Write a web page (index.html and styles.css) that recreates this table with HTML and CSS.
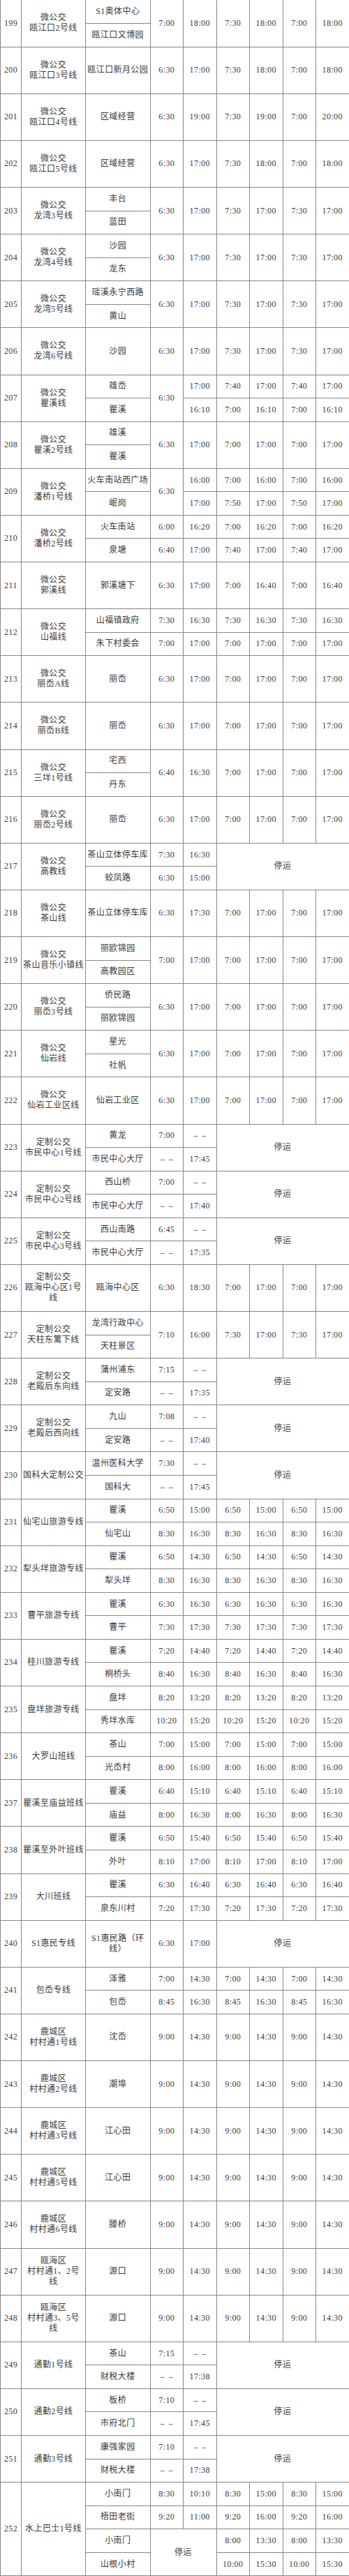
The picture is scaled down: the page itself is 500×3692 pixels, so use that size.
FILE: index.html
```html
<!DOCTYPE html>
<html lang="zh-CN">
<head>
<meta charset="utf-8">
<title>线路时刻表</title>
<link rel="stylesheet" href="styles.css">
</head>
<body>
<table class="timetable">
<colgroup>
<col class="c-no"><col class="c-name"><col class="c-stop">
<col class="c-t"><col class="c-t"><col class="c-t"><col class="c-t"><col class="c-t"><col class="c-t">
</colgroup>
<tbody>
<tr class="first"><td rowspan="2">199</td><td rowspan="2">微公交<br>瓯江口2号线</td><td>S1奥体中心</td><td rowspan="2">7:00</td><td rowspan="2">18:00</td><td rowspan="2">7:30</td><td rowspan="2">18:00</td><td rowspan="2">7:00</td><td rowspan="2">18:00</td></tr>
<tr><td>瓯江口文博园</td></tr>
<tr class="tall"><td>200</td><td>微公交<br>瓯江口3号线</td><td>瓯江口新月公园</td><td>6:30</td><td>17:00</td><td>7:30</td><td>18:00</td><td>7:00</td><td>18:00</td></tr>
<tr class="tall"><td>201</td><td>微公交<br>瓯江口4号线</td><td>区域经营</td><td>6:30</td><td>19:00</td><td>7:30</td><td>19:00</td><td>7:00</td><td>20:00</td></tr>
<tr class="tall"><td>202</td><td>微公交<br>瓯江口5号线</td><td>区域经营</td><td>6:30</td><td>17:00</td><td>7:30</td><td>18:00</td><td>7:00</td><td>18:00</td></tr>
<tr><td rowspan="2">203</td><td rowspan="2">微公交<br>龙湾3号线</td><td>丰台</td><td rowspan="2">6:30</td><td rowspan="2">17:00</td><td rowspan="2">7:30</td><td rowspan="2">17:00</td><td rowspan="2">7:30</td><td rowspan="2">17:00</td></tr>
<tr><td>蓝田</td></tr>
<tr><td rowspan="2">204</td><td rowspan="2">微公交<br>龙湾4号线</td><td>沙园</td><td rowspan="2">6:30</td><td rowspan="2">17:00</td><td rowspan="2">7:30</td><td rowspan="2">17:00</td><td rowspan="2">7:30</td><td rowspan="2">17:00</td></tr>
<tr><td>龙东</td></tr>
<tr><td rowspan="2">205</td><td rowspan="2">微公交<br>龙湾5号线</td><td>瑶溪永宁西路</td><td rowspan="2">6:30</td><td rowspan="2">17:00</td><td rowspan="2">7:30</td><td rowspan="2">17:00</td><td rowspan="2">7:30</td><td rowspan="2">17:00</td></tr>
<tr><td>黄山</td></tr>
<tr class="tall"><td>206</td><td>微公交<br>龙湾6号线</td><td>沙园</td><td>6:30</td><td>17:00</td><td>7:30</td><td>17:00</td><td>7:30</td><td>17:00</td></tr>
<tr><td rowspan="2">207</td><td rowspan="2">微公交<br>瞿溪线</td><td>雄岙</td><td rowspan="2">6:30</td><td>17:00</td><td>7:40</td><td>17:00</td><td>7:40</td><td>17:00</td></tr>
<tr><td>瞿溪</td><td>16:10</td><td>7:00</td><td>16:10</td><td>7:00</td><td>16:10</td></tr>
<tr><td rowspan="2">208</td><td rowspan="2">微公交<br>瞿溪2号线</td><td>雄溪</td><td rowspan="2">6:30</td><td rowspan="2">17:00</td><td rowspan="2">7:00</td><td rowspan="2">17:00</td><td rowspan="2">7:00</td><td rowspan="2">17:00</td></tr>
<tr><td>瞿溪</td></tr>
<tr><td rowspan="2">209</td><td rowspan="2">微公交<br>潘桥1号线</td><td>火车南站西广场</td><td rowspan="2">6:30</td><td>16:00</td><td>7:00</td><td>16:00</td><td>7:00</td><td>16:00</td></tr>
<tr><td>岷岗</td><td>17:00</td><td>7:50</td><td>17:00</td><td>7:50</td><td>17:00</td></tr>
<tr><td rowspan="2">210</td><td rowspan="2">微公交<br>潘桥2号线</td><td>火车南站</td><td>6:00</td><td>16:20</td><td>7:00</td><td>16:20</td><td>7:00</td><td>16:20</td></tr>
<tr><td>泉塘</td><td>6:40</td><td>17:00</td><td>7:40</td><td>17:00</td><td>7:40</td><td>17:00</td></tr>
<tr class="tall"><td>211</td><td>微公交<br>郭溪线</td><td>郭溪塘下</td><td>6:30</td><td>17:00</td><td>7:00</td><td>16:40</td><td>7:00</td><td>16:40</td></tr>
<tr><td rowspan="2">212</td><td rowspan="2">微公交<br>山福线</td><td>山福镇政府</td><td>7:30</td><td>16:30</td><td>7:30</td><td>16:30</td><td>7:30</td><td>16:30</td></tr>
<tr><td>朱下村委会</td><td>7:00</td><td>17:00</td><td>7:00</td><td>17:00</td><td>7:00</td><td>17:00</td></tr>
<tr class="tall"><td>213</td><td>微公交<br>丽岙A线</td><td>丽岙</td><td>6:30</td><td>17:00</td><td>7:00</td><td>17:00</td><td>7:00</td><td>17:00</td></tr>
<tr class="tall"><td>214</td><td>微公交<br>丽岙B线</td><td>丽岙</td><td>6:30</td><td>17:00</td><td>7:00</td><td>17:00</td><td>7:00</td><td>17:00</td></tr>
<tr><td rowspan="2">215</td><td rowspan="2">微公交<br>三垟1号线</td><td>宅西</td><td rowspan="2">6:40</td><td rowspan="2">16:30</td><td rowspan="2">7:00</td><td rowspan="2">17:00</td><td rowspan="2">7:00</td><td rowspan="2">17:00</td></tr>
<tr><td>丹东</td></tr>
<tr class="tall"><td>216</td><td>微公交<br>丽岙2号线</td><td>丽岙</td><td>6:30</td><td>17:00</td><td>7:00</td><td>17:00</td><td>7:00</td><td>17:00</td></tr>
<tr><td rowspan="2">217</td><td rowspan="2">微公交<br>高教线</td><td>茶山立体停车库</td><td>7:30</td><td>16:30</td><td rowspan="2" colspan="4">停运</td></tr>
<tr><td>蛟凤路</td><td>6:30</td><td>15:00</td></tr>
<tr class="tall"><td>218</td><td>微公交<br>茶山线</td><td>茶山立体停车库</td><td>6:30</td><td>17:30</td><td>7:00</td><td>17:00</td><td>7:00</td><td>17:00</td></tr>
<tr><td rowspan="2">219</td><td rowspan="2">微公交<br>茶山音乐小镇线</td><td>丽欧锦园</td><td rowspan="2">7:00</td><td rowspan="2">17:00</td><td rowspan="2">7:00</td><td rowspan="2">17:00</td><td rowspan="2">7:00</td><td rowspan="2">17:00</td></tr>
<tr><td>高教园区</td></tr>
<tr><td rowspan="2">220</td><td rowspan="2">微公交<br>丽岙3号线</td><td>侨民路</td><td rowspan="2">6:30</td><td rowspan="2">17:00</td><td rowspan="2">7:00</td><td rowspan="2">17:00</td><td rowspan="2">7:00</td><td rowspan="2">17:00</td></tr>
<tr><td>丽欧锦园</td></tr>
<tr><td rowspan="2">221</td><td rowspan="2">微公交<br>仙岩线</td><td>星光</td><td rowspan="2">6:30</td><td rowspan="2">17:00</td><td rowspan="2">7:00</td><td rowspan="2">17:00</td><td rowspan="2">7:00</td><td rowspan="2">17:00</td></tr>
<tr><td>社帆</td></tr>
<tr class="tall"><td>222</td><td>微公交<br>仙岩工业区线</td><td>仙岩工业区</td><td>6:30</td><td>17:00</td><td>7:00</td><td>17:00</td><td>7:00</td><td>17:00</td></tr>
<tr><td rowspan="2">223</td><td rowspan="2">定制公交<br>市民中心1号线</td><td>黄龙</td><td>7:00</td><td class="dash">–&nbsp;&nbsp;–</td><td rowspan="2" colspan="4">停运</td></tr>
<tr><td>市民中心大厅</td><td class="dash">–&nbsp;&nbsp;–</td><td>17:45</td></tr>
<tr><td rowspan="2">224</td><td rowspan="2">定制公交<br>市民中心2号线</td><td>西山桥</td><td>7:00</td><td class="dash">–&nbsp;&nbsp;–</td><td rowspan="2" colspan="4">停运</td></tr>
<tr><td>市民中心大厅</td><td class="dash">–&nbsp;&nbsp;–</td><td>17:40</td></tr>
<tr><td rowspan="2">225</td><td rowspan="2">定制公交<br>市民中心3号线</td><td>西山南路</td><td>6:45</td><td class="dash">–&nbsp;&nbsp;–</td><td rowspan="2" colspan="4">停运</td></tr>
<tr><td>市民中心大厅</td><td class="dash">–&nbsp;&nbsp;–</td><td>17:35</td></tr>
<tr class="tall"><td>226</td><td>定制公交<br>瓯海中心区1号线</td><td>瓯海中心区</td><td>6:30</td><td>18:30</td><td>7:00</td><td>17:00</td><td>7:00</td><td>17:00</td></tr>
<tr><td rowspan="2">227</td><td rowspan="2">定制公交<br>天柱东篱下线</td><td>龙湾行政中心</td><td rowspan="2">7:10</td><td rowspan="2">16:00</td><td rowspan="2">7:30</td><td rowspan="2">17:00</td><td rowspan="2">7:30</td><td rowspan="2">17:00</td></tr>
<tr><td>天柱景区</td></tr>
<tr><td rowspan="2">228</td><td rowspan="2">定制公交<br>老殿后东向线</td><td>蒲州浦东</td><td>7:15</td><td class="dash">–&nbsp;&nbsp;–</td><td rowspan="2" colspan="4">停运</td></tr>
<tr><td>定安路</td><td class="dash">–&nbsp;&nbsp;–</td><td>17:35</td></tr>
<tr><td rowspan="2">229</td><td rowspan="2">定制公交<br>老殿后西向线</td><td>九山</td><td>7:08</td><td class="dash">–&nbsp;&nbsp;–</td><td rowspan="2" colspan="4">停运</td></tr>
<tr><td>定安路</td><td class="dash">–&nbsp;&nbsp;–</td><td>17:40</td></tr>
<tr><td rowspan="2">230</td><td rowspan="2">国科大定制公交</td><td>温州医科大学</td><td>7:30</td><td class="dash">–&nbsp;&nbsp;–</td><td rowspan="2" colspan="4">停运</td></tr>
<tr><td>国科大</td><td class="dash">–&nbsp;&nbsp;–</td><td>17:45</td></tr>
<tr><td rowspan="2">231</td><td rowspan="2">仙宅山旅游专线</td><td>瞿溪</td><td>6:50</td><td>15:00</td><td>6:50</td><td>15:00</td><td>6:50</td><td>15:00</td></tr>
<tr><td>仙宅山</td><td>8:30</td><td>16:30</td><td>8:30</td><td>16:30</td><td>8:30</td><td>16:30</td></tr>
<tr><td rowspan="2">232</td><td rowspan="2">犁头垟旅游专线</td><td>瞿溪</td><td>6:50</td><td>14:30</td><td>6:50</td><td>14:30</td><td>6:50</td><td>14:30</td></tr>
<tr><td>犁头垟</td><td>8:30</td><td>16:30</td><td>8:30</td><td>16:30</td><td>8:30</td><td>16:30</td></tr>
<tr><td rowspan="2">233</td><td rowspan="2">曹平旅游专线</td><td>瞿溪</td><td>6:30</td><td>16:30</td><td>6:30</td><td>16:30</td><td>6:30</td><td>16:30</td></tr>
<tr><td>曹平</td><td>7:30</td><td>17:30</td><td>7:30</td><td>17:30</td><td>7:30</td><td>17:30</td></tr>
<tr><td rowspan="2">234</td><td rowspan="2">桂川旅游专线</td><td>瞿溪</td><td>7:20</td><td>14:40</td><td>7:20</td><td>14:40</td><td>7:20</td><td>14:40</td></tr>
<tr><td>桐桥头</td><td>8:40</td><td>16:30</td><td>8:40</td><td>16:30</td><td>8:40</td><td>16:30</td></tr>
<tr><td rowspan="2">235</td><td rowspan="2">盘垟旅游专线</td><td>盘垟</td><td>8:20</td><td>13:20</td><td>8:20</td><td>13:20</td><td>8:20</td><td>13:20</td></tr>
<tr><td>秀垟水库</td><td>10:20</td><td>15:20</td><td>10:20</td><td>15:20</td><td>10:20</td><td>15:20</td></tr>
<tr><td rowspan="2">236</td><td rowspan="2">大罗山班线</td><td>茶山</td><td>7:00</td><td>15:00</td><td>7:00</td><td>15:00</td><td>7:00</td><td>15:00</td></tr>
<tr><td>光岙村</td><td>8:00</td><td>16:00</td><td>8:00</td><td>16:00</td><td>8:00</td><td>16:00</td></tr>
<tr><td rowspan="2">237</td><td rowspan="2">瞿溪至庙益班线</td><td>瞿溪</td><td>6:40</td><td>15:10</td><td>6:40</td><td>15:10</td><td>6:40</td><td>15:10</td></tr>
<tr><td>庙益</td><td>8:00</td><td>16:30</td><td>8:00</td><td>16:30</td><td>8:00</td><td>16:30</td></tr>
<tr><td rowspan="2">238</td><td rowspan="2">瞿溪至外叶班线</td><td>瞿溪</td><td>6:50</td><td>15:40</td><td>6:50</td><td>15:40</td><td>6:50</td><td>15:40</td></tr>
<tr><td>外叶</td><td>8:10</td><td>17:00</td><td>8:10</td><td>17:00</td><td>8:10</td><td>17:00</td></tr>
<tr><td rowspan="2">239</td><td rowspan="2">大川班线</td><td>瞿溪</td><td>6:30</td><td>16:40</td><td>6:30</td><td>16:40</td><td>6:30</td><td>16:40</td></tr>
<tr><td>泉东川村</td><td>7:20</td><td>17:30</td><td>7:20</td><td>17:30</td><td>7:20</td><td>17:30</td></tr>
<tr class="tall"><td>240</td><td>S1惠民专线</td><td>S1惠民路（环线）</td><td>6:30</td><td>17:00</td><td colspan="4">停运</td></tr>
<tr><td rowspan="2">241</td><td rowspan="2">包岙专线</td><td>泽雅</td><td>7:00</td><td>14:30</td><td>7:00</td><td>14:30</td><td>7:00</td><td>14:30</td></tr>
<tr><td>包岙</td><td>8:45</td><td>16:30</td><td>8:45</td><td>16:30</td><td>8:45</td><td>16:30</td></tr>
<tr class="tall"><td>242</td><td>鹿城区<br>村村通1号线</td><td>沈岙</td><td>9:00</td><td>14:30</td><td>9:00</td><td>14:30</td><td>9:00</td><td>14:30</td></tr>
<tr class="tall"><td>243</td><td>鹿城区<br>村村通2号线</td><td>潮埠</td><td>9:00</td><td>14:30</td><td>9:00</td><td>14:30</td><td>9:00</td><td>14:30</td></tr>
<tr class="tall"><td>244</td><td>鹿城区<br>村村通3号线</td><td>江心田</td><td>9:00</td><td>14:30</td><td>9:00</td><td>14:30</td><td>9:00</td><td>14:30</td></tr>
<tr class="tall"><td>245</td><td>鹿城区<br>村村通5号线</td><td>江心田</td><td>9:00</td><td>14:30</td><td>9:00</td><td>14:30</td><td>9:00</td><td>14:30</td></tr>
<tr class="tall"><td>246</td><td>鹿城区<br>村村通6号线</td><td>滕桥</td><td>9:00</td><td>14:30</td><td>9:00</td><td>14:30</td><td>9:00</td><td>14:30</td></tr>
<tr class="tall"><td>247</td><td>瓯海区<br>村村通1、2号线</td><td>源口</td><td>9:00</td><td>14:30</td><td>9:00</td><td>14:30</td><td>9:00</td><td>14:30</td></tr>
<tr class="tall"><td>248</td><td>瓯海区<br>村村通3、5号线</td><td>源口</td><td>9:00</td><td>14:30</td><td>9:00</td><td>14:30</td><td>9:00</td><td>14:30</td></tr>
<tr><td rowspan="2">249</td><td rowspan="2">通勤1号线</td><td>茶山</td><td>7:15</td><td class="dash">–&nbsp;&nbsp;–</td><td rowspan="2" colspan="4">停运</td></tr>
<tr><td>财税大楼</td><td class="dash">–&nbsp;&nbsp;–</td><td>17:38</td></tr>
<tr><td rowspan="2">250</td><td rowspan="2">通勤2号线</td><td>板桥</td><td>7:10</td><td class="dash">–&nbsp;&nbsp;–</td><td rowspan="2" colspan="4">停运</td></tr>
<tr><td>市府北门</td><td class="dash">–&nbsp;&nbsp;–</td><td>17:45</td></tr>
<tr><td rowspan="2">251</td><td rowspan="2">通勤3号线</td><td>康强家园</td><td>7:10</td><td class="dash">–&nbsp;&nbsp;–</td><td rowspan="2" colspan="4">停运</td></tr>
<tr><td>财税大楼</td><td class="dash">–&nbsp;&nbsp;–</td><td>17:38</td></tr>
<tr><td rowspan="4">252</td><td rowspan="4">水上巴士1号线</td><td>小南门</td><td>8:30</td><td>10:10</td><td>8:30</td><td>15:00</td><td>8:30</td><td>15:00</td></tr>
<tr><td>梧田老街</td><td>9:20</td><td>11:00</td><td>9:20</td><td>16:00</td><td>9:20</td><td>16:00</td></tr>
<tr><td>小南门</td><td rowspan="2" colspan="2">停运</td><td>8:00</td><td>13:30</td><td>8:00</td><td>13:30</td></tr>
<tr><td>山根小村</td><td>10:00</td><td>15:30</td><td>10:00</td><td>15:30</td></tr>
</tbody>
</table>
</body>
</html>
```

FILE: styles.css
```css
html, body {
  margin: 0;
  padding: 0;
  background: #ffffff;
}

.timetable {
  border-collapse: collapse;
  table-layout: fixed;
  width: 500px;
  font-family: "Liberation Serif", "Noto Sans CJK SC", serif;
  font-size: 12px;
  color: #3a3a3a;
}

.c-no { width: 30px; }
.c-name { width: 92px; }
.c-stop { width: 92.5px; }
.c-t { width: 47.5px; }

.timetable tr {
  height: 33.5636px;
}

.timetable tr.tall {
  height: 67.1272px;
}

.timetable td {
  border: 1px solid #868686;
  padding: 0 2px;
  text-align: center;
  vertical-align: middle;
  line-height: 15px;
  letter-spacing: 0.4px;
  overflow: hidden;
}

.timetable tr.first td {
  border-top: none;
}

.timetable td.dash {
  letter-spacing: 0;
}
```
